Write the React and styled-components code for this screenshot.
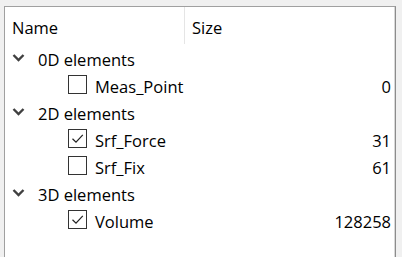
import React from 'react';
import styled, { createGlobalStyle } from 'styled-components';

const GlobalStyle = createGlobalStyle`
  html, body {
    margin: 0;
    padding: 0;
    background: #f0f0f0;
    overflow: hidden;
  }
  body {
    font-family: "Open Sans", "Noto Sans", sans-serif;
  }
`;

const Frame = styled.div`
  padding: 6px 6px 0 4px;
  height: 257px;
  box-sizing: border-box;
`;

const Panel = styled.div`
  background: #fff;
  border: 1px solid #a0a0a0;
  border-right-color: #8c8c8c;
  border-bottom: none;
  box-shadow: inset -1px 0 0 #d8d8d8;
  height: 260px;
  box-sizing: border-box;
  color: #000;
  font-size: 16.5px;
`;

const Header = styled.div`
  display: grid;
  grid-template-columns: 180px 1fr;
  height: 37px;
  align-items: stretch;
`;

const HeaderCell = styled.div`
  display: flex;
  align-items: center;
  padding-left: ${p => p.$pad}px;
  padding-top: 4px;
  border-right: ${p => (p.$divider ? '1px solid #e5e5e5' : 'none')};
`;

const Row = styled.div`
  display: flex;
  align-items: center;
  height: 27px;
  padding-right: 4px;
`;

const Chevron = styled.span`
  display: flex;
  width: 13px;
  margin-left: 7px;
  margin-right: 13px;
`;

const Label = styled.span`
  flex: 1;
  white-space: nowrap;
  padding-left: ${p => p.$indent}px;
  display: flex;
  align-items: center;
  gap: 8px;
`;

const Text = styled.span`
  padding-top: 3px;
`;

const Box = styled.span`
  width: 17px;
  height: 17px;
  border: 1px solid #333;
  box-sizing: content-box;
  display: flex;
  align-items: center;
  justify-content: center;
  background: #fff;
`;

const Count = styled.span`
  text-align: right;
  padding-top: 3px;
`;

const ChevronIcon = () => (
  <svg width="13" height="9" viewBox="0 0 13 9">
    <path d="M1.5 2 L6.5 7 L11.5 2" fill="none" stroke="#404040" strokeWidth="2.4" />
  </svg>
);

const CheckIcon = () => (
  <svg width="15" height="15" viewBox="0 0 15 15">
    <path d="M2.5 7.8 L6 11.2 L12.8 3.8" fill="none" stroke="#222" strokeWidth="1.2" />
  </svg>
);

const groups = [
  { name: '0D elements', items: [{ name: 'Meas_Point', size: 0, checked: false }] },
  {
    name: '2D elements',
    items: [
      { name: 'Srf_Force', size: 31, checked: true },
      { name: 'Srf_Fix', size: 61, checked: false },
    ],
  },
  { name: '3D elements', items: [{ name: 'Volume', size: 128258, checked: true }] },
];

export default function App() {
  return (
    <Frame>
      <GlobalStyle />
      <Panel>
        <Header>
          <HeaderCell $pad={7} $divider>Name</HeaderCell>
          <HeaderCell $pad={7}>Size</HeaderCell>
        </Header>
        {groups.map(g => (
          <React.Fragment key={g.name}>
            <Row>
              <Chevron><ChevronIcon /></Chevron>
              <Label $indent={0}><Text>{g.name}</Text></Label>
            </Row>
            {g.items.map(it => (
              <Row key={it.name}>
                <Label $indent={63}>
                  <Box>{it.checked && <CheckIcon />}</Box>
                  <Text>{it.name}</Text>
                </Label>
                <Count>{it.size}</Count>
              </Row>
            ))}
          </React.Fragment>
        ))}
      </Panel>
    </Frame>
  );
}
